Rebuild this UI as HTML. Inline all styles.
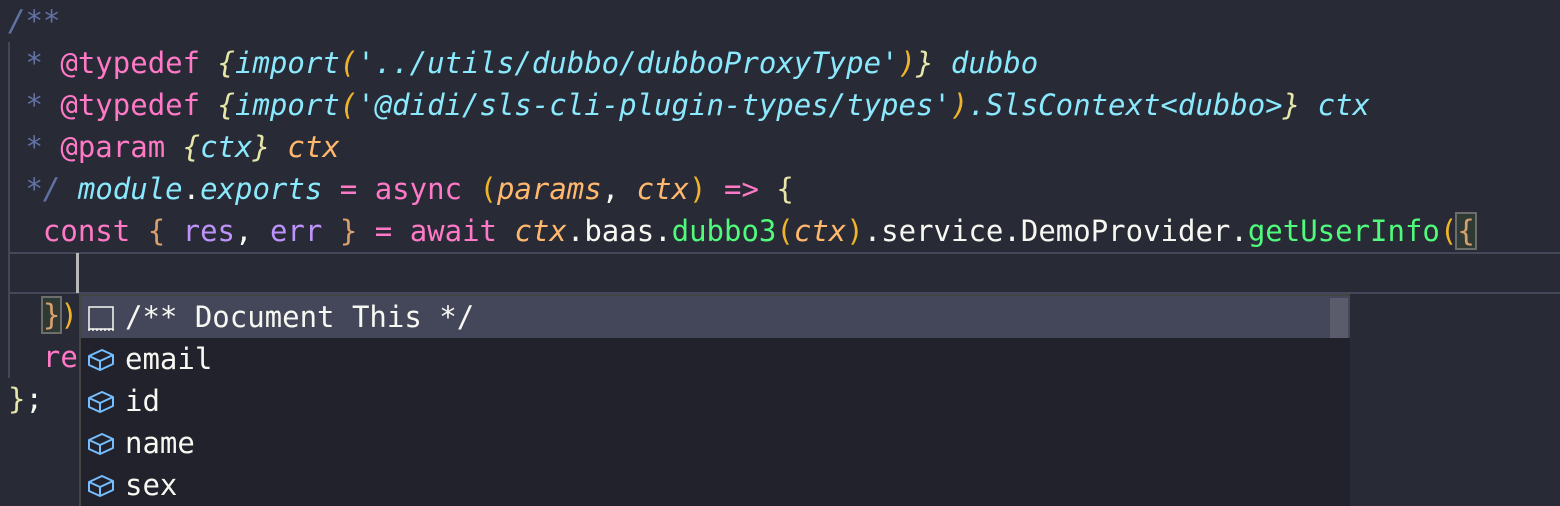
<!DOCTYPE html>
<html><head><meta charset="utf-8"><style>
html,body{margin:0;padding:0;background:#282a36;width:1560px;height:506px;overflow:hidden}
.ed{position:relative;width:1560px;height:506px;font-family:"DejaVu Sans Mono","Liberation Mono",monospace;font-size:29px}
.l{position:absolute;left:8px;height:42px;line-height:42px;white-space:pre;color:#f8f8f2}
.i{font-style:italic}
.cm{color:#6272a4}.pk{color:#ff79c6}.cy{color:#8be9fd}.yb{color:#e6e6a8}.gd{color:#f0b429}
.or{color:#ffb86c}.pu{color:#bd93f9}.gr{color:#50fa7b}.br{color:#d9a06e}
.box{outline:2px solid #6b6e6b;background:#2f3a35}
.guide{position:absolute;left:8px;top:42px;width:2px;height:336px;background:#44475a}
.cur{position:absolute;left:8px;right:0;top:252px;height:38px;border-top:2px solid #44475a;border-bottom:2px solid #44475a}
.caret{position:absolute;left:76px;top:253px;width:3px;height:40px;background:#b8b8b8}
.sw{position:absolute;left:79px;top:294px;width:1269px;height:212px;background:#21222c;border-left:2px solid #454545;border-top:2px solid #454545}
.row{position:absolute;left:0;width:1269px;height:42px;line-height:42px;font-family:"DejaVu Sans Mono","Liberation Mono",monospace;color:#f8f8f2;white-space:pre}
.row .t{position:absolute;left:44px;top:0}
.sel{background:#44475a}
.sb{position:absolute;left:1249px;top:2px;width:18px;height:40px;background:#5a5c6c}
svg{position:absolute;left:6px;top:8px}
</style></head><body><div class="ed">
<div class="guide"></div>
<div class="cur"></div>
<div class="l" style="top:0"><span class="cm i">/**</span></div>
<div class="l" style="top:42px"><span class="cm"> * </span><span class="pk">@typedef</span> <span class="yb i">{</span><span class="cy i">import</span><span class="gd i">(</span><span class="cy i">'../utils/dubbo/dubboProxyType'</span><span class="gd i">)</span><span class="yb i">}</span> <span class="cy i">dubbo</span></div>
<div class="l" style="top:84px"><span class="cm"> * </span><span class="pk">@typedef</span> <span class="yb i">{</span><span class="cy i">import</span><span class="gd i">(</span><span class="cy i">'@didi/sls-cli-plugin-types/types'</span><span class="gd i">)</span><span class="cy i">.SlsContext&lt;dubbo&gt;</span><span class="yb i">}</span> <span class="cy i">ctx</span></div>
<div class="l" style="top:126px"><span class="cm"> * </span><span class="pk">@param</span> <span class="yb i">{</span><span class="cy i">ctx</span><span class="yb i">}</span> <span class="or i">ctx</span></div>
<div class="l" style="top:168px"><span class="cm i"> */</span> <span class="cy i">module</span>.<span class="cy i">exports</span> <span class="pk">=</span> <span class="pk">async</span> <span class="gd">(</span><span class="or i">params</span>, <span class="or i">ctx</span><span class="gd">)</span> <span class="pk">=&gt;</span> <span class="yb">{</span></div>
<div class="l" style="top:210px">  <span class="pk">const</span> <span class="br">{</span> <span class="pu">res</span>, <span class="pu">err</span> <span class="br">}</span> <span class="pk">=</span> <span class="pk">await</span> <span class="or i">ctx</span>.baas.<span class="gr">dubbo3</span><span class="gd">(</span><span class="or i">ctx</span><span class="gd">)</span>.service.DemoProvider.<span class="gr">getUserInfo</span><span class="gd">(</span><span class="br box">{</span></div>
<div class="caret"></div>
<div class="l" style="top:294px">  <span class="br box">}</span><span class="gd">)</span></div>
<div class="l" style="top:336px">  <span class="pk">re</span></div>
<div class="l" style="top:378px"><span class="yb">}</span>;</div>
<div class="sw">
 <div class="row sel" style="top:0"><svg width="28" height="28" viewBox="0 0 28 28"><rect x="2" y="3" width="24" height="22" fill="none" stroke="#f8f8f2" stroke-width="1.5"/><line x1="1" y1="26" x2="27" y2="26" stroke="#f8f8f2" stroke-width="1.5" stroke-dasharray="2 2"/></svg><span class="t">/** Document This */</span><div class="sb"></div></div>
 <div class="row" style="top:42px"><svg width="28" height="28" viewBox="0 0 28 28"><path d="M2 10 L15 4 L26 9 L26 18 L13 24 L2 19 Z M2 10 L13 15 L26 9 M13 15 L13 24" fill="none" stroke="#75beff" stroke-width="2" stroke-linejoin="round"/></svg><span class="t">email</span></div>
 <div class="row" style="top:84px"><svg width="28" height="28" viewBox="0 0 28 28"><path d="M2 10 L15 4 L26 9 L26 18 L13 24 L2 19 Z M2 10 L13 15 L26 9 M13 15 L13 24" fill="none" stroke="#75beff" stroke-width="2" stroke-linejoin="round"/></svg><span class="t">id</span></div>
 <div class="row" style="top:126px"><svg width="28" height="28" viewBox="0 0 28 28"><path d="M2 10 L15 4 L26 9 L26 18 L13 24 L2 19 Z M2 10 L13 15 L26 9 M13 15 L13 24" fill="none" stroke="#75beff" stroke-width="2" stroke-linejoin="round"/></svg><span class="t">name</span></div>
 <div class="row" style="top:168px"><svg width="28" height="28" viewBox="0 0 28 28"><path d="M2 10 L15 4 L26 9 L26 18 L13 24 L2 19 Z M2 10 L13 15 L26 9 M13 15 L13 24" fill="none" stroke="#75beff" stroke-width="2" stroke-linejoin="round"/></svg><span class="t">sex</span></div>
</div>
</div></body></html>
